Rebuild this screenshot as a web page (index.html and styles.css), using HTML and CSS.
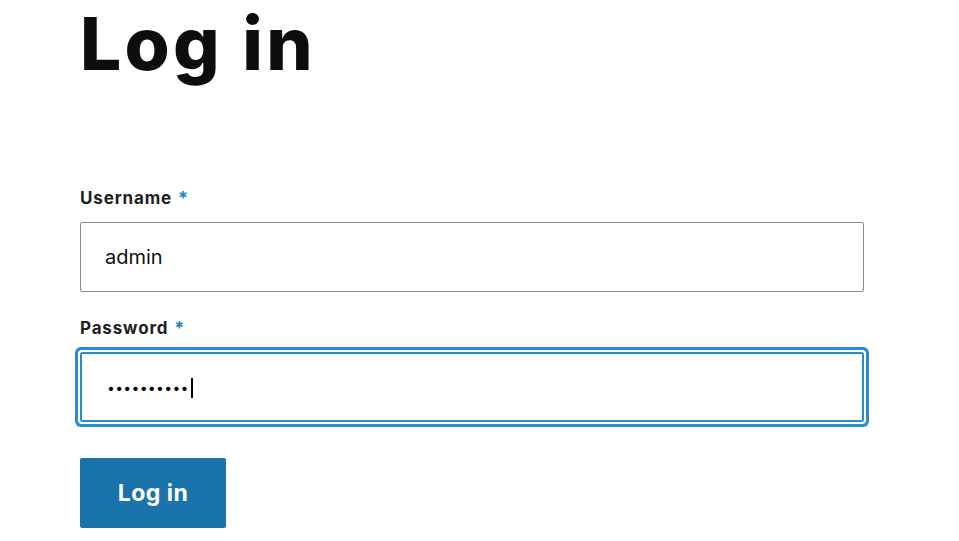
FILE: index.html
```
<!DOCTYPE html>
<html lang="en">
<head>
<meta charset="utf-8">
<title>Log in</title>
<link rel="stylesheet" href="styles.css">
</head>
<body>
<main class="page">
  <h1 class="page-title">Log in</h1>
  <form class="login-form" action="#" method="post">
    <div class="form-item">
      <label class="form-label" for="edit-name">Username <span class="required">*</span></label>
      <input class="form-input" id="edit-name" type="text" value="admin">
    </div>
    <div class="form-item">
      <label class="form-label" for="edit-pass">Password <span class="required">*</span></label>
      <div class="field-wrap">
        <input class="form-input form-input--password is-focused" id="edit-pass" type="password" value="adminadmin">
        <span class="caret" aria-hidden="true"></span>
      </div>
    </div>
    <div class="form-actions">
      <button class="button-primary" type="submit">Log in</button>
    </div>
  </form>
</main>
</body>
</html>
```
FILE: styles.css
```
html, body {
  margin: 0;
  padding: 0;
  background: #ffffff;
}

body {
  font-family: Inter, "Liberation Sans", sans-serif;
  color: #232429;
}

.page {
  padding-left: 80px;
}

.page-title {
  margin: 0 0 98px;
  font-size: 73px;
  line-height: 88px;
  font-weight: 800;
  letter-spacing: 0.045em;
  color: #0d0d0e;
}

.login-form {
  width: 784px;
}

.form-item {
  margin-bottom: 24px;
}

.form-label {
  display: block;
  margin-bottom: 12px;
  font-size: 17px;
  line-height: 24px;
  font-weight: 650;
  letter-spacing: 0.05em;
  color: #1d1e22;
}

.required {
  margin-left: 1px;
  font-size: 18px;
  font-weight: 700;
  color: #1c86c6;
}

.field-wrap {
  position: relative;
}

.form-input {
  display: block;
  box-sizing: border-box;
  width: 100%;
  height: 70px;
  margin: 0;
  padding: 0 24px;
  border: 1px solid #8b8b8f;
  border-radius: 2px;
  background: #ffffff;
  font-family: Inter, "Liberation Sans", sans-serif;
  font-size: 20px;
  color: #0f0f10;
  outline: none;
}

.form-input--password {
  padding-left: 26px;
  font-size: 14px;
  letter-spacing: 0.3px;
  color: #000000;
}

.form-input:focus,
.form-input.is-focused {
  border-color: #2a8ccd;
  box-shadow: inset 0 0 0 1px #2a8ccd, 0 0 0 2px #ffffff, 0 0 0 5px #2a8ccd;
}

.caret {
  position: absolute;
  left: 111px;
  top: 26px;
  width: 2px;
  height: 20px;
  background: #000000;
}

.form-actions {
  margin-top: 36px;
}

.button-primary {
  display: inline-flex;
  align-items: center;
  justify-content: center;
  box-sizing: border-box;
  height: 70px;
  width: 146px;
  margin: 0;
  padding: 0;
  border: 0;
  border-radius: 2px;
  background: #1a73aa;
  color: #ffffff;
  font-family: Inter, "Liberation Sans", sans-serif;
  font-size: 23px;
  font-weight: 700;
  letter-spacing: 0.02em;
  cursor: pointer;
}
```
